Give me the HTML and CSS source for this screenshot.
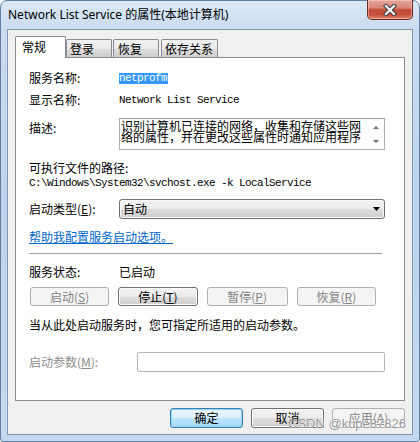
FILE: index.html
```html
<!DOCTYPE html>
<html>
<head>
<meta charset="utf-8">
<title>Network List Service 的属性(本地计算机)</title>
<link rel="stylesheet" href="styles.css">
</head>
<body>
<div class="window">
  <div class="titlebar">
    <span class="title">Network List Service 的属性(本地计算机)</span>
    <div class="close">
      <svg width="14" height="12" viewBox="0 0 14 12">
        <path d="M3 2 L11 10 M11 2 L3 10" stroke="#3d3d3d" stroke-width="4.4" stroke-linecap="square" fill="none"/>
        <path d="M3 2 L11 10 M11 2 L3 10" stroke="#ffffff" stroke-width="2.2" stroke-linecap="square" fill="none"/>
      </svg>
    </div>
  </div>
  <div class="client">
    <div class="tabs">
      <div class="tab active">常规</div>
      <div class="tab t-login">登录</div>
      <div class="tab t-recover">恢复</div>
      <div class="tab t-deps">依存关系</div>
    </div>
    <div class="panel">
      <div class="row r-name">
        <span class="label">服务名称:</span>
        <span class="mono"><span class="sel">netprofm</span></span>
      </div>
      <div class="row r-display">
        <span class="label">显示名称:</span>
        <span class="mono">Network List Service</span>
      </div>
      <div class="row r-desc">
        <span class="label label-top">描述:</span>
        <div class="desc">
          <div class="desc-text">
            <div class="desc-line">识别计算机已连接的网络，收集和存储这些网</div>
            <div class="desc-line">络的属性，并在更改这些属性时通知应用程序</div>
          </div>
          <div class="scroll">
            <span class="arr-up"></span>
            <span class="arr-down"></span>
          </div>
        </div>
      </div>
      <div class="row r-pathlabel">可执行文件的路径:</div>
      <div class="row r-path mono">C:\Windows\System32\svchost.exe -k LocalService</div>
      <div class="row r-type">
        <span class="label">启动类型(<u>E</u>):</span>
        <div class="combo">
          <span class="combo-text">自动</span>
          <svg class="combo-arrow" width="7" height="4" viewBox="0 0 7 4"><polygon points="0,0 7,0 3.5,4" fill="#000"/></svg>
        </div>
      </div>
      <div class="row r-link"><span class="link">帮助我配置服务启动选项。</span></div>
      <div class="sep"></div>
      <div class="row r-status">
        <span class="label">服务状态:</span>
        <span>已启动</span>
      </div>
      <div class="row r-btns">
        <div class="btn btn-status disabled">启动(<u>S</u>)</div>
        <div class="btn btn-status">停止(<u>T</u>)</div>
        <div class="btn btn-status wide disabled">暂停(<u>P</u>)</div>
        <div class="btn btn-status disabled">恢复(<u>R</u>)</div>
      </div>
      <div class="row r-hint">当从此处启动服务时，您可指定所适用的启动参数。</div>
      <div class="row r-param">
        <span class="label label-param disabled-text">启动参数(<u>M</u>):</span>
        <div class="input"></div>
      </div>
    </div>
    <div class="dlg-buttons">
      <div class="btn btn-dlg default">确定</div>
      <div class="btn btn-dlg">取消</div>
      <div class="btn btn-dlg disabled">应用(<u>A</u>)</div>
    </div>
  </div>
  <div class="watermark">CSDN @kupe87826</div>
</div>
</body>
</html>
```

FILE: styles.css
```css
* { box-sizing: border-box; }
html, body { margin: 0; padding: 0; }
body {
  width: 420px;
  height: 442px;
  overflow: hidden;
  background: #ffffff;
  font-family: "Noto Sans CJK SC", sans-serif;
  font-size: 12px;
  color: #000;
}

.window {
  position: relative;
  width: 420px;
  height: 442px;
  border: 1px solid #5f7fa3;
  border-radius: 7px 7px 3px 3px;
  background: linear-gradient(180deg, #dbe8f5 0, #cadcf0 28px, #bdd4ec 200px, #c5d9ee 442px);
  padding: 0 6px 6px 6px;
  display: flex;
  flex-direction: column;
}

.titlebar {
  height: 28px;
  display: flex;
  align-items: flex-start;
  flex: none;
}
.title {
  font-family: "Noto Sans", "Noto Sans CJK SC", sans-serif;
  font-size: 12px;
  line-height: 16px;
  margin-top: 6px;
  margin-left: 1px;
  color: #000;
  white-space: nowrap;
}
.close {
  margin-left: auto;
  margin-top: -1px;
  width: 46px;
  height: 20px;
  border: 1px solid #6b2b24;
  border-top: none;
  border-radius: 0 0 5px 5px;
  background: linear-gradient(180deg, #e6a79a 0, #d98778 40%, #c24b38 52%, #c9503c 78%, #e08870 100%);
  box-shadow: inset 0 0 0 1px rgba(255, 220, 210, 0.45);
  display: flex;
  align-items: center;
  justify-content: center;
}

.client {
  flex: 1;
  background: #f0f0f0;
  border: 1px solid #8196b0;
  padding: 6px 7px 6px 7px;
  display: flex;
  flex-direction: column;
}

.tabs {
  height: 21px;
  display: flex;
  align-items: flex-end;
  position: relative;
  z-index: 1;
  flex: none;
}
.tab {
  height: 18px;
  border: 1px solid #898c95;
  border-bottom: none;
  border-radius: 2px 2px 0 0;
  background: linear-gradient(180deg, #f2f2f2 0, #ebebeb 50%, #dddddd 50%, #cfcfcf 100%);
  line-height: 17px;
  white-space: nowrap;
}
.tab.active {
  width: 51px;
  height: 22px;
  margin-bottom: -1px;
  background: #ffffff;
  line-height: 20px;
  padding-left: 6px;
}
.t-login { width: 46px; padding-left: 3px; }
.t-recover { width: 46px; margin-left: 1px; padding-left: 4px; }
.t-deps { width: 57px; margin-left: 2px; padding-left: 3px; }

.panel {
  flex: 1;
  border: 1px solid #898c95;
  background: #ffffff;
  padding: 0 19px 0 13px;
  display: flex;
  flex-direction: column;
}

.row {
  display: flex;
  align-items: center;
  height: 12px;
  line-height: 12px;
  white-space: nowrap;
  flex: none;
}
.label { width: 90px; flex: none; }

.mono {
  font-family: "Liberation Mono", monospace;
  font-size: 11px;
  letter-spacing: -0.6px;
}
.sel {
  display: inline-block;
  background: #3399ff;
  color: #ffffff;
  height: 11px;
  line-height: 11px;
  padding-right: 1px;
}

.r-name { margin-top: 14px; }
.r-display { margin-top: 10px; }
.r-desc { margin-top: 12px; height: 32px; align-items: flex-start; }
.label-top { padding-top: 4px; }
.desc {
  flex: 1;
  height: 32px;
  border: 1px solid #abadb3;
  border-top-color: #9a9ca2;
  background: #ffffff;
  display: flex;
}
.desc-text {
  flex: 1;
  padding: 1px 0 0 1px;
}
.desc-line {
  height: 11px;
  line-height: 11px;
  white-space: nowrap;
}
.scroll {
  width: 17px;
  flex: none;
  display: flex;
  flex-direction: column;
  align-items: center;
  padding-top: 7px;
}
.arr-up, .arr-down {
  width: 0;
  height: 0;
  border-left: 3px solid transparent;
  border-right: 3px solid transparent;
}
.arr-up { border-bottom: 3px solid #6d6d6d; }
.arr-down { border-top: 3px solid #6d6d6d; margin-top: 11px; }

.r-pathlabel { margin-top: 12px; }
.r-path { margin-top: 3px; }

.r-type { margin-top: 10px; height: 20px; }
.combo {
  flex: 1;
  height: 20px;
  border: 1px solid #707070;
  border-radius: 3px;
  background: linear-gradient(180deg, #f2f2f2 0, #ebebeb 50%, #dddddd 50%, #cfcfcf 100%);
  box-shadow: inset 0 0 0 1px #fbfbfb;
  display: flex;
  align-items: center;
  padding: 0 4px 0 3px;
}
.combo-arrow { margin-left: auto; }

.r-link { margin-top: 12px; }
.link { color: #0066cc; text-decoration: underline; }

.sep {
  margin-top: 10px;
  height: 1px;
  margin-right: 3px;
  background: #a0a0a0;
  flex: none;
}

.r-status { margin-top: 12px; }

.r-btns { margin-top: 9px; height: 19px; padding-left: 1px; }
.btn {
  display: flex;
  align-items: center;
  justify-content: center;
  border: 1px solid #707070;
  border-radius: 3px;
  background: linear-gradient(180deg, #f2f2f2 0, #ebebeb 50%, #dddddd 50%, #cfcfcf 100%);
  box-shadow: inset 0 0 0 1px #fcfcfc;
  color: #000;
  line-height: 12px;
  white-space: nowrap;
}
.btn.disabled {
  border-color: #adb2b5;
  background: #f4f4f4;
  box-shadow: none;
  color: #838383;
}
.btn-status { width: 81px; height: 19px; margin-right: 9px; }
.btn-status.wide { width: 83px; margin-right: 9px; }

.r-hint { margin-top: 13px; }

.r-param { margin-top: 21px; height: 20px; }
.label-param { width: 108px; }
.disabled-text { color: #8d8d8d; }
.input {
  flex: 1;
  height: 20px;
  border: 1px solid #b5b5b5;
  border-radius: 2px;
  background: #ffffff;
}

.dlg-buttons {
  margin-top: 7px;
  height: 20px;
  display: flex;
  justify-content: flex-end;
  gap: 8px;
  flex: none;
}
.btn-dlg { width: 73px; height: 20px; }
.btn.default {
  border-color: #3c7fb1;
  background: linear-gradient(180deg, #eaf6fd 0, #d9f0fc 50%, #bee6fd 50%, #a7d9f5 100%);
  box-shadow: inset 0 0 0 1px #8fd4f7;
}

.watermark {
  position: absolute;
  left: 287px;
  top: 415px;
  font-family: "Liberation Sans", sans-serif;
  font-size: 13px;
  line-height: 15px;
  color: rgba(110, 110, 110, 0.75);
  text-shadow: 0 0 1px #ffffff, 0 0 1px #ffffff;
  white-space: nowrap;
}
```
